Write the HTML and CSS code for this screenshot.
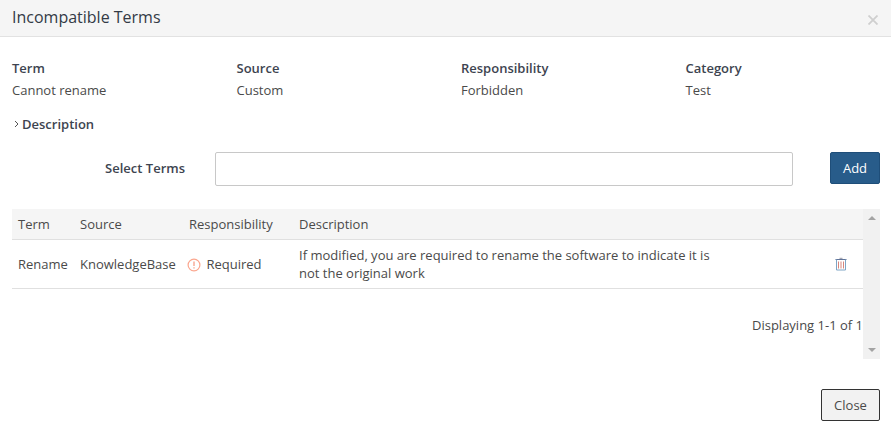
FILE: index.html
```html
<!DOCTYPE html>
<html lang="en">
<head>
<meta charset="utf-8">
<title>Incompatible Terms</title>
<link rel="stylesheet" href="styles.css">
</head>
<body>
<div class="modal">
  <header class="modal-header">
    <h1 class="modal-title">Incompatible Terms</h1>
    <svg class="close-x" width="10" height="10" viewBox="0 0 10 10"><path d="M.5.5l9 9M9.500.5l-9 9" stroke="#cfcfcf" stroke-width="1.800" fill="none"/></svg>
  </header>
  <section class="details">
    <div class="detail"><div class="detail-label">Term</div><div>Cannot rename</div></div>
    <div class="detail"><div class="detail-label">Source</div><div>Custom</div></div>
    <div class="detail"><div class="detail-label">Responsibility</div><div>Forbidden</div></div>
    <div class="detail"><div class="detail-label">Category</div><div>Test</div></div>
  </section>
  <div class="description">
    <svg class="chevron" width="5" height="8" viewBox="0 0 5 8"><path d="M1 1l3 3-3 3" stroke="#555" stroke-width="1" fill="none"/></svg>
    <span>Description</span>
  </div>
  <div class="select-row">
    <label class="select-label">Select Terms</label>
    <input class="select-input" type="text">
    <button class="btn-add">Add</button>
  </div>
  <div class="table-wrap">
    <div class="table-main">
      <table class="terms">
        <thead>
          <tr><th class="c-term">Term</th><th class="c-source">Source</th><th class="c-resp">Responsibility</th><th class="c-desc">Description</th><th></th></tr>
        </thead>
        <tbody>
          <tr>
            <td>Rename</td>
            <td>KnowledgeBase</td>
            <td class="resp-cell">
              <svg class="warn" width="14" height="14" viewBox="0 0 14 14"><circle cx="7" cy="7" r="5.900" fill="none" stroke="#fba68e" stroke-width="1.200"/><path d="M7 3.500v4.500M7 9.300v1.300" stroke="#f58d72" stroke-width="1.100" fill="none"/></svg>
              <span>Required</span>
            </td>
            <td class="desc-cell">If modified, you are required to rename the software to indicate it is not the original work</td>
            <td class="trash-cell">
              <svg width="12" height="14" viewBox="0 0 12 14"><path d="M4.500 1.500h3" stroke="#a9a9b5" stroke-width="1.500" fill="none"/><path d="M.500 2.500h11" stroke="#5f7398" stroke-width="1"/><path d="M1.500 2.500v10.500h9v-10.500" stroke="#7fa5c5" stroke-width="1" fill="none"/><path d="M3.500 4.500v7M6 4.500v7M8.500 4.500v7" stroke="#d8867c" stroke-width="1"/></svg>
            </td>
          </tr>
        </tbody>
      </table>
      <div class="pager">Displaying 1-1 of 1</div>
    </div>
    <div class="scrollbar">
      <span class="arrow-up"></span>
      <span class="arrow-down"></span>
    </div>
  </div>
  <footer class="modal-footer">
    <button class="btn-close">Close</button>
  </footer>
</div>
</body>
</html>
```
FILE: styles.css
```css
* { box-sizing: border-box; }
html, body { margin: 0; padding: 0; background: #fff; }
body { font-family: "Open Sans", sans-serif; font-size: 13px; line-height: 18px; color: #4a4a4a; overflow: hidden; }
.modal { width: 891px; height: 432px; }
.modal-header { height: 37px; background: #f5f5f5; border-bottom: 1px solid #e2e2e2; padding: 0 13px 0 12px; display: flex; justify-content: space-between; align-items: center; }
.modal-title { margin: 0 0 2px; font-size: 16px; font-weight: 400; line-height: 22px; color: #333a45; }
.close-x { margin-top: 4px; }
.details { display: grid; grid-template-columns: repeat(4, 224.5px); padding: 22px 0 0 12px; }
.detail { display: flex; flex-direction: column; gap: 4px; }
.detail-label { font-weight: 600; color: #3d4450; }
.description { display: flex; align-items: center; gap: 3px; margin-top: 16px; padding-left: 14px; font-weight: 600; color: #3d4450; }
.select-row { display: flex; align-items: flex-start; margin-top: 19px; padding-left: 12px; }
.select-label { width: 173px; text-align: right; font-weight: 600; color: #3d4450; line-height: 32px; }
.select-input { width: 578px; height: 34px; margin-left: 30px; border: 1px solid #c8c8c8; border-radius: 2px; background: #fff; }
.btn-add { width: 50px; height: 32px; margin-left: 37px; border: 1px solid #1f4e79; border-radius: 2px; background: #285c8a; color: #fff; font: 13px "Open Sans", sans-serif; padding: 0; }
.table-wrap { display: flex; width: 868px; height: 150px; margin: 23px 0 0 12px; }
.table-main { width: 851px; }
.terms { width: 851px; border-collapse: collapse; table-layout: fixed; }
.terms th { height: 30px; padding: 0 6px; background: #f5f5f5; border-bottom: 1px solid #e0e0e0; text-align: left; font-weight: 400; }
.terms td { height: 49px; padding: 0 6px; border-bottom: 1px solid #e0e0e0; vertical-align: middle; }
.c-term { width: 62px; }
.c-source { width: 109px; }
.c-resp { width: 110px; }
.c-desc { width: 440px; }
.terms .resp-cell { padding-left: 4px; }
.resp-cell { white-space: nowrap; }
.warn { vertical-align: -3px; margin-right: 2px; }
.desc-cell { padding-right: 20px; }
.terms .trash-cell { padding-right: 16px; }
.trash-cell svg { display: block; margin-left: auto; }
.pager { text-align: right; margin-top: 27px; }
.scrollbar { width: 17px; background: #f1f1f1; display: flex; flex-direction: column; justify-content: space-between; align-items: center; padding: 7px 0 7px; }
.arrow-up { width: 0; height: 0; border-left: 4px solid transparent; border-right: 4px solid transparent; border-bottom: 4px solid #a3a3a3; }
.arrow-down { width: 0; height: 0; border-left: 4px solid transparent; border-right: 4px solid transparent; border-top: 4px solid #a3a3a3; }
.modal-footer { display: flex; justify-content: flex-end; padding: 30px 11px 0 0; }
.btn-close { width: 59px; height: 32px; border: 1px solid #333; border-radius: 2px; background: #f2f2f2; color: #4a4a4a; font: 13px "Open Sans", sans-serif; padding: 0; }
```
